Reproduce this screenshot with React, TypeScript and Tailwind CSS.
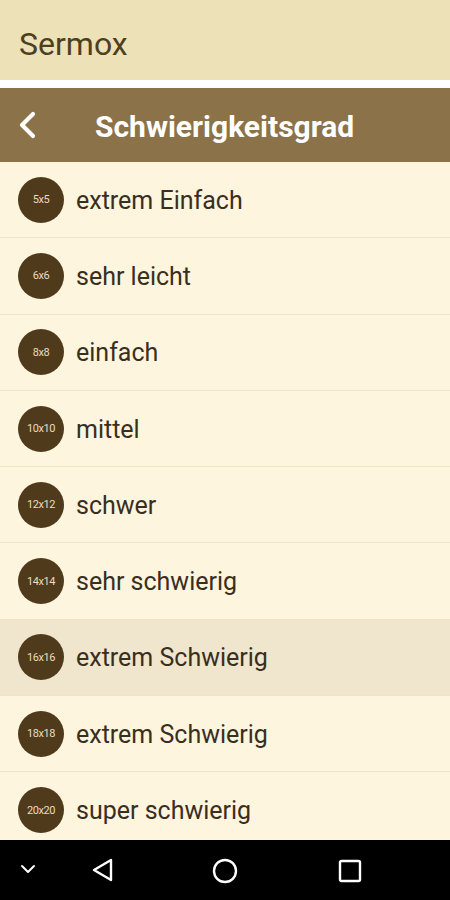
import React from "react";

const rows = [
  { size: "5x5", label: "extrem Einfach" },
  { size: "6x6", label: "sehr leicht" },
  { size: "8x8", label: "einfach" },
  { size: "10x10", label: "mittel" },
  { size: "12x12", label: "schwer" },
  { size: "14x14", label: "sehr schwierig" },
  { size: "16x16", label: "extrem Schwierig", active: true },
  { size: "18x18", label: "extrem Schwierig" },
  { size: "20x20", label: "super schwierig" },
];

export default function App() {
  return (
    <div
      className="relative w-[450px] h-[900px] overflow-hidden bg-white"
      style={{ fontFamily: "Roboto, 'Noto Sans', sans-serif" }}
    >
      <div className="h-[80px] bg-[#ede1b7] flex items-center pl-[19px]">
        <span className="text-[32px] text-[#4d3f22] leading-none mt-[7px]">Sermox</span>
      </div>
      <div className="h-[8px] bg-white" />
      <div className="h-[74px] bg-[#8c7249] flex items-center">
        <div className="w-[95px] pl-[16px] flex items-center">
          <svg width="24" height="32" viewBox="0 0 24 32" fill="none">
            <path d="M17 5 L6 16 L17 27" stroke="white" strokeWidth="4.2" strokeLinecap="round" strokeLinejoin="round" />
          </svg>
        </div>
        <span className="text-[30px] font-bold text-white leading-none mt-[4px]">Schwierigkeitsgrad</span>
      </div>
      <div className="bg-[#fdf5de]">
        {rows.map((r, i) => (
          <div
            key={i}
            className={`h-[76.3px] flex items-center border-b border-[#efe5c6] ${r.active ? "bg-[#efe6cd]" : ""}`}
          >
            <div className="ml-[18px] w-[46px] h-[46px] rounded-full bg-[#4f3a1c] flex items-center justify-center shrink-0">
              <span className="text-[11px] text-[#e9dcc0] leading-none tracking-[-0.4px]">{r.size}</span>
            </div>
            <span className="ml-[12px] text-[25px] text-[#3a2e1e] leading-none mt-[1px]">{r.label}</span>
          </div>
        ))}
      </div>
      <div className="absolute left-0 bottom-0 w-full h-[60px] bg-black flex items-center">
        <div className="absolute left-[19px] top-[23px]">
          <svg width="18" height="12" viewBox="0 0 18 12" fill="none">
            <path d="M3 3 L9 9 L15 3" stroke="white" strokeWidth="2" strokeLinecap="round" strokeLinejoin="round" />
          </svg>
        </div>
        <div className="absolute left-[90px] top-[17px]">
          <svg width="26" height="26" viewBox="0 0 26 26" fill="none">
            <path d="M21 3 L21 23 L4 13 Z" stroke="white" strokeWidth="2.4" strokeLinejoin="round" />
          </svg>
        </div>
        <div className="absolute left-[212px] top-[18px]">
          <svg width="26" height="26" viewBox="0 0 26 26" fill="none">
            <circle cx="13" cy="13" r="11" stroke="white" strokeWidth="2.4" />
          </svg>
        </div>
        <div className="absolute left-[338px] top-[19px]">
          <svg width="24" height="24" viewBox="0 0 24 24" fill="none">
            <rect x="2" y="2" width="20" height="20" rx="1.5" stroke="white" strokeWidth="2.4" />
          </svg>
        </div>
      </div>
    </div>
  );
}
